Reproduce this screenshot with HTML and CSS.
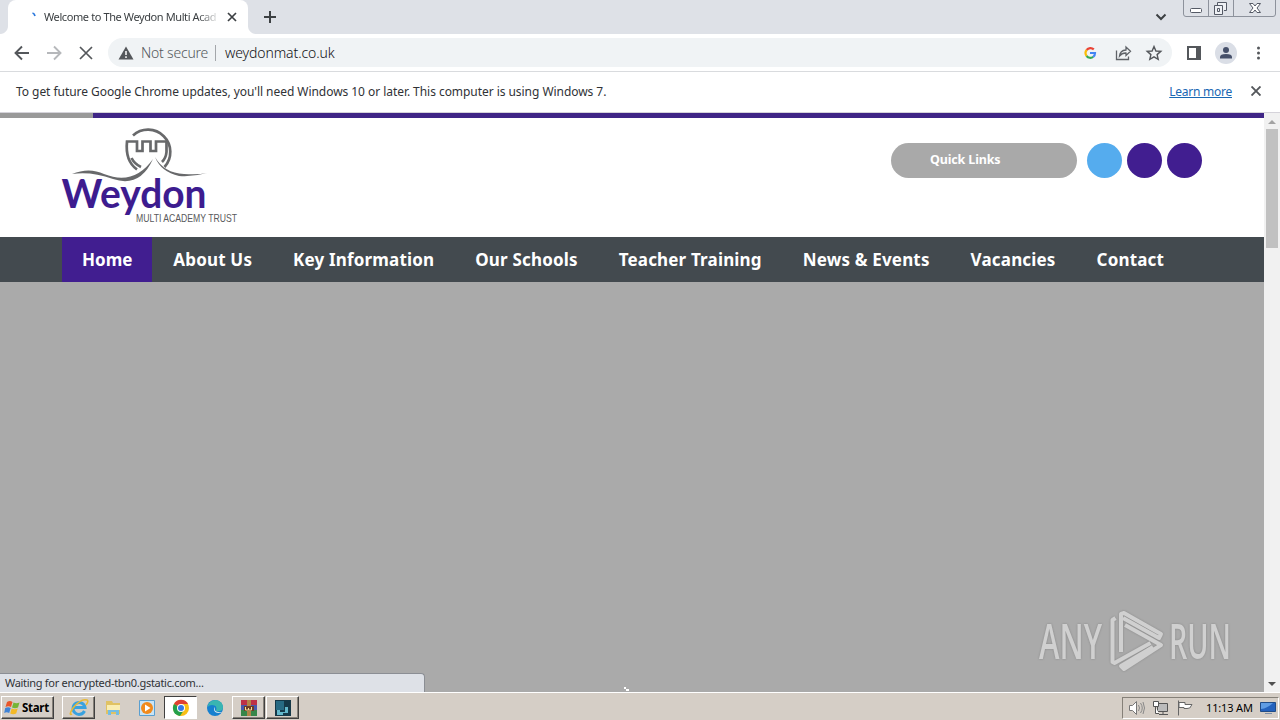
FILE: index.html
```html
<!DOCTYPE html>
<html lang="en">
<head>
<meta charset="utf-8">
<title>Welcome to The Weydon Multi Academy Trust</title>
<link rel="stylesheet" href="styles.css">
</head>
<body>
<div class="screen">
  <div class="tabstrip">
    <div class="tab-edge"></div>
    <div class="tab">
      <svg class="spinner" width="16" height="16" viewBox="0 0 16 16"><path d="M7.500 3Q9.500 3.500 10 6" fill="none" stroke="#2b78dc" stroke-width="1.700"/></svg>
      <span class="tab-title">Welcome to The Weydon Multi Acad</span>
      <svg class="tab-close" width="10" height="10" viewBox="0 0 10 10"><path d="M1 1l8 8M9 1L1 9" stroke="#3c4043" stroke-width="1.700"/></svg>
    </div>
    <div class="tab-right"></div>
    <svg class="new-tab" width="14" height="14" viewBox="0 0 14 14"><path d="M7 1v12M1 7h12" stroke="#3c4043" stroke-width="2"/></svg>
    <svg class="tab-search" width="12" height="8" viewBox="0 0 12 8"><path d="M1.500 1.500L6 6l4.500-4.500" fill="none" stroke="#3c4043" stroke-width="2"/></svg>
    <svg class="window-controls" width="94" height="18" viewBox="0 0 94 18">
      <path d="M.5 0V14q0 2.500 2.500 2.500H90q2.500 0 2.500-2.500V0M25.500 0V16M50.500 0V16" fill="none" stroke="#8d929c"/>
      <rect x="7.500" y="8.500" width="11" height="4" rx="1" fill="#fff" stroke="#555a66"/>
      <path d="M34.500 5V2.500h9v8H41M31.500 5.500h8v9h-8zM34.500 8.500h2v3h-2z" fill="#eef0f4" stroke="#555a66"/>
      <path d="M66.500 3.500h3.500l2 2.500 2-2.500h3.500L74 8l3.500 4.500H74L72 10l-2 2.500h-3.500L70 8z" fill="#fff" stroke="#555a66"/>
    </svg>
  </div>

  <div class="toolbar">
    <svg class="nav-buttons" width="80" height="16" viewBox="0 0 80 16">
      <path d="M15 8H2M8 1.500L1.500 8 8 14.500" fill="none" stroke="#54575b" stroke-width="1.900"/>
      <path d="M33 8h13M40 1.500L46.500 8 40 14.500" fill="none" stroke="#b6b8bb" stroke-width="1.900"/>
      <path d="M66 2l12 12M78 2L66 14" stroke="#54575b" stroke-width="1.700"/>
    </svg>
    <div class="omnibox">
      <svg width="16" height="14" viewBox="0 0 16 14"><path d="M8 .5L15.500 13.500H.5z" fill="#54575b"/><path d="M8 5v4M8 10.300v1.700" stroke="#fff" stroke-width="1.500"/></svg>
      <span class="not-secure">Not secure</span>
      <span class="divider"></span>
      <span class="url">weydonmat.co.uk</span>
      <svg class="omni-icons" width="80" height="18" viewBox="0 0 80 18">
        <g fill="none" stroke-width="2.200">
          <path d="M10.800 5.400A4.900 4.900 0 0 0 3.600 6" stroke="#ea4335"/>
          <path d="M3.600 6a5 5 0 0 0 0 6" stroke="#fbbc05"/>
          <path d="M3.600 12a4.900 4.900 0 0 0 6.600.9" stroke="#34a853"/>
          <path d="M7 9h5q0 2.600-1.800 3.900" stroke="#4285f4"/>
        </g>
        <path d="M33.500 6.500v9h12v-3M36.500 12q.5-5.500 6.500-6V3l4.500 4.300-4.500 4.200V9q-4-.2-6.500 3z" fill="none" stroke="#5f6368" stroke-width="1.300"/>
        <path d="M71 2.500l1.900 4.500 4.900.4-3.700 3.200 1.100 4.800-4.200-2.500-4.200 2.500 1.100-4.800-3.700-3.200 4.900-.4z" fill="none" stroke="#54575b" stroke-width="1.400"/>
      </svg>
    </div>
    <svg class="toolbar-icons" width="84" height="22" viewBox="0 0 84 22">
      <path d="M2 5h12v12H2z" fill="none" stroke="#54575b" stroke-width="2"/><path d="M10 4h5v14h-5z" fill="#54575b"/>
      <circle cx="40" cy="11" r="11" fill="#dadee6"/><circle cx="40" cy="8" r="3" fill="#46506a"/><path d="M34 16.500V15q0-3 6-3t6 3v1.500z" fill="#46506a"/>
      <g fill="#54575b"><circle cx="72.500" cy="6" r="1.500"/><circle cx="72.500" cy="11" r="1.500"/><circle cx="72.500" cy="16" r="1.500"/></g>
    </svg>
  </div>

  <div class="infobar">
    <span class="info-text">To get future Google Chrome updates, you'll need Windows 10 or later. This computer is using Windows 7.</span>
    <a class="learn">Learn more</a>
    <svg width="10" height="10" viewBox="0 0 10 10"><path d="M.5.5l9 9M9.500.5l-9 9" stroke="#54575b" stroke-width="1.900"/></svg>
  </div>

  <div class="viewport">
    <div class="page">
      <div class="topline"></div>
      <div class="site-header">
        <svg class="logo" width="180" height="102" viewBox="60 124 180 102">
          <g fill="none" stroke="#68696b" stroke-width="2.700">
            <path d="M133 135.500A22.300 22.300 0 0 1 164.500 167"/>
            <path d="M137 169.500Q125 161 127 141.500H137V151H142.500V141.500H150.500V151H156V141.500H166.500V152Q166 158 162 162"/>
            <path d="M131.500 158q3 6 9.500 9"/>
          </g>
          <path d="M72 174q17-7 32 0 30 12 49-15-13 29-40 20-22-8-41-5z" fill="#68696b"/>
          <path d="M155 157q9 16 29 17 14 1 23-1-14 4-28 3-18-4-24-19z" fill="#68696b"/>
          <text x="61.500" y="207.500" class="logo-name" textLength="145" lengthAdjust="spacingAndGlyphs">Weydon</text>
          <text x="136" y="222" class="logo-sub" textLength="101" lengthAdjust="spacingAndGlyphs">MULTI ACADEMY TRUST</text>
        </svg>
        <div class="quick">Quick Links</div>
        <div class="social blue"></div>
        <div class="social"></div>
        <div class="social"></div>
      </div>
      <div class="menu">
        <a class="active">Home</a><a>About Us</a><a>Key Information</a><a>Our Schools</a><a>Teacher Training</a><a>News &amp; Events</a><a>Vacancies</a><a>Contact</a>
      </div>
      <div class="hero"></div>
    </div>
    <div class="scrollbar">
      <svg width="8" height="4" viewBox="0 0 8 4"><path d="M0 4l4-4 4 4z" fill="#a3a3a3"/></svg>
      <div class="thumb"></div>
      <svg class="down" width="8" height="4" viewBox="0 0 8 4"><path d="M0 0l4 4 4-4z" fill="#505050"/></svg>
    </div>
    <div class="status">Waiting for encrypted-tbn0.gstatic.com...</div>
    <svg class="busy" width="8" height="6" viewBox="0 0 8 6"><path d="M0 1h2v2H0zM2 3h3v2H2z" fill="#fff"/></svg>
    <svg class="watermark" width="204" height="76" viewBox="1034 600 204 76">
      <text x="1039" y="659" textLength="63" lengthAdjust="spacingAndGlyphs">ANY</text>
      <text x="1169" y="659" textLength="62" lengthAdjust="spacingAndGlyphs">RUN</text>
      <g fill="none" stroke="#d0d0d0" stroke-width="4" stroke-linejoin="round">
        <path d="M1115.500 618l-3 2v42l2 1 36-20"/>
        <path d="M1121 652v-38l3-1 37 21-2 4-36-20"/>
        <path d="M1125 625l36 20-37 24-3-3 32-19"/>
      </g>
    </svg>
  </div>

  <div class="taskbar">
    <div class="start">
      <svg width="17" height="16" viewBox="0 0 17 16"><path d="M3 2q3-2 5.500 0L7 7Q4.500 5.500 1.500 7z" fill="#e8562a"/><path d="M9.500 2.500q3 1.500 6 0l-1.500 5q-3 1.500-6 0z" fill="#76b536"/><path d="M1.200 8q3-1.500 5.500 0L5.200 13q-2.500-1.500-5 0z" fill="#3f83d6"/><path d="M7.700 8.500q3 1.500 6 0l-1.500 5q-3 1.500-6 0z" fill="#f4b926"/></svg>
      <span>Start</span>
    </div>
    <div class="task raised"><svg width="20" height="20" viewBox="0 0 20 20"><path d="M15.500 13A6 6 0 1 1 16 9.500H5.500" fill="none" stroke="#39a2df" stroke-width="3"/><path d="M3 16Q-1 18 4 10 12 0 18 2q2 1-1 5" fill="none" stroke="#e8b935" stroke-width="1.500"/></svg></div>
    <div class="task"><svg width="20" height="20" viewBox="0 0 20 20"><path d="M3 3h6l1 2h7v11H3z" fill="#e0c263"/><path d="M4 7h13v5H4z" fill="#f9edb2"/><path d="M5 17v-5h11v5h-3v-3H8v3z" fill="#75bde2"/></svg></div>
    <div class="task"><svg width="20" height="20" viewBox="0 0 20 20"><path d="M2.500 2.500h15v15h-15z" fill="#c9e4f5" stroke="#5a9fd0"/><circle cx="10" cy="10" r="6" fill="#f18a1c"/><path d="M8 6.500v7l5.500-3.500z" fill="#fff"/></svg></div>
    <div class="task pressed"><svg width="18" height="18" viewBox="0 0 18 18"><circle cx="9" cy="9" r="8" fill="#f9bf16"/><path d="M9 9L2 5A8 8 0 0 1 16 5H9z" fill="#df4033"/><path d="M2 5a8 8 0 0 0 6 12l4-6-3-2z" fill="#25a04b"/><circle cx="9" cy="9" r="4" fill="#fff"/><circle cx="9" cy="9" r="3" fill="#3579e6"/></svg></div>
    <div class="task"><svg width="18" height="18" viewBox="0 0 18 18"><circle cx="9" cy="9" r="8" fill="#1680cf"/><path d="M1.500 8Q3 1 10 1q7 1 7 8-1 4-7 3 2-6-4-6-3 0-4.500 2z" fill="#39b5b1"/><path d="M9 8q-2 6 7 5-1 1-3 1-5 0-5-4 0-1 1-2z" fill="#dceaf0"/></svg></div>
    <div class="task raised"><svg width="18" height="18" viewBox="0 0 18 18"><path d="M1 1h16v5H1z" fill="#bd3147"/><path d="M1 6h16v5H1z" fill="#4759ad"/><path d="M1 11h16v6H1z" fill="#38864a"/><path d="M7 1h4v16H7z" fill="#b28549"/><path d="M4 7h10v5H4z" fill="#6e3b25"/><path d="M5.500 8v3h3V9m0 2h3V8" fill="none" stroke="#f3df99"/></svg></div>
    <div class="task raised"><svg width="18" height="18" viewBox="0 0 18 18"><path d="M1 1h16v16H1z" fill="#153848"/><path d="M2 2h8v9H2z" fill="#276a83"/><path d="M3 11h3v2h5V8h3v6H9v2H3z" fill="#63b7cb"/></svg></div>
    <div class="tray">
      <svg width="72" height="18" viewBox="0 0 72 18">
        <path d="M2.500 6.500h3l4-4v13l-4-4h-3z" fill="#fff" stroke="#777"/><path d="M11.500 6q2 3 0 6M13.500 4q3.500 5 0 10M16 3q3 6 0 12" fill="none" stroke="#888"/>
        <path d="M30.500 4.500h10v8h-10zM32 15.500h9M36 13v2" fill="#bbb" stroke="#555"/><path d="M26.500 2.500h5v5h-5zM28.500 8v6.500H32" fill="#fff" stroke="#555"/>
        <path d="M51.500 1.500v15M52 3.500h6v2h7q-2 5-5 4h-3v-1h-5z" fill="#fff" stroke="#666"/>
      </svg>
      <span class="clock">11:13 AM</span>
      <svg width="16" height="14" viewBox="0 0 16 14"><path d="M.5 1.500h15v9H.5z" fill="#2462bd" stroke="#204c87"/><path d="M1 8q7-1 12-6H1z" fill="#5f9ce3"/><path d="M5 12.500h7" stroke="#7d8fa7"/></svg>
    </div>
  </div>
</div>
</body>
</html>
```
FILE: styles.css
```css
* { box-sizing: border-box; }
body { margin: 0; overflow: hidden; font-family: "Noto Sans", sans-serif; }
svg { display: block; flex: none; }
.screen { width: 1280px; height: 720px; display: flex; flex-direction: column; background: #fff; white-space: nowrap; }

.tabstrip { height: 34px; flex: none; display: flex; align-items: center; background: linear-gradient(#dee1e7, #dee1e7) 0 0 no-repeat; }
.tab-edge, .tab-right { width: 8px; height: 34px; }
.tab-edge { background: radial-gradient(circle at 0 26px, #dee1e7 7.500px, #fff 8.500px) 0 26px / 8px 8px no-repeat; background: radial-gradient(circle at 0 0, #dee1e7 7.500px, #fff 8.500px) 0 26px / 8px 8px no-repeat; }
.tab-right { background: radial-gradient(circle at 100% 0, #dee1e7 7.500px, #fff 8.500px) 0 26px / 8px 8px no-repeat; }
.tab { width: 240px; height: 34px; display: flex; align-items: center; padding: 0 11px 0 17px; background: #fff; border-radius: 8px 8px 0 0; }
.spinner { margin-top: 1px; }
.tab-title { width: 180px; margin: 0 0 1px 3px; font-size: 11px; letter-spacing: -.4px; color: #3c4043; mask-image: linear-gradient(to right, #000 154px, transparent 176px); }
.tab-close { margin-left: auto; }
.new-tab { margin-left: 7px; }
.tab-search { margin-left: auto; }
.window-controls { align-self: flex-start; margin: 0 3px 0 16px; }

.toolbar { height: 38px; flex: none; display: flex; align-items: center; padding: 0 10px 0 14px; border-bottom: 1px solid #d9dbde; }
.omnibox { width: 1064px; height: 29px; margin-left: 14px; padding-left: 10px; display: flex; align-items: center; background: #f0f3f5; border-radius: 15px; font-size: 14px; }
.not-secure { width: 67px; margin-left: 7px; color: #54585c; font-weight: 300; letter-spacing: -.2px; }
.divider { width: 1px; height: 16px; margin: 0 9px 0 7px; background: #a3a6aa; }
.url { color: #101114; font-weight: 300; letter-spacing: -.1px; }
.omni-icons { margin: 0 9px 0 auto; }
.toolbar-icons { margin-left: 14px; }

.infobar { height: 41px; flex: none; display: flex; align-items: center; padding: 0 19px 2px 16px; border-bottom: 1px solid #d5d3da; font-size: 12px; color: #303236; }
.info-text { letter-spacing: -.05px; }
.learn { margin-left: auto; margin-right: 19px; color: #1967b3; text-decoration: underline; letter-spacing: -.25px; }

.viewport { position: relative; height: 579px; flex: none; display: flex; }
.page { width: 1264px; display: flex; flex-direction: column; }
.topline { height: 5px; background: linear-gradient(to right, #999 93px, #3f2586 93px); }
.site-header { height: 119px; display: flex; padding: 0 62px 0 60px; }
.logo { margin-top: 6px; }
.logo-name { font: 700 41px Lato, sans-serif; fill: #3d1c8f; }
.logo-sub { font: 400 10.500px "Liberation Sans", sans-serif; fill: #58595b; }
.quick { width: 186px; height: 35px; margin: 25px 5px 0 auto; padding-left: 39px; border-radius: 18px; background: #a9a9a9; color: #fff; font: 700 12.500px/33px "Noto Sans", sans-serif; letter-spacing: -.15px; }
.social { width: 35px; height: 35px; margin: 25px 0 0 5px; border-radius: 50%; background: #411e90; }
.blue { background: #55acee; }
.menu { height: 45px; display: flex; gap: 1px; padding-left: 62px; background: #434a4f; color: #fff; font: 700 17px/45px "Noto Sans", sans-serif; letter-spacing: .17px; }
.menu a { padding: 0 20px; }
.menu .active { background: #411e90; letter-spacing: 0; }
.hero { flex: 1; background: #aaa; }
.scrollbar { width: 16px; padding: 7px 2px 6px; display: flex; flex-direction: column; align-items: center; background: #f1f1f1; }
.thumb { width: 12px; height: 119px; margin-top: 5px; background: #c1c1c1; }
.down { margin-top: auto; }
.status { position: absolute; left: 0; bottom: 0; width: 425px; height: 19px; padding-left: 5px; background: #dee1e7; border: solid #8b8e94; border-width: 1px 1px 0 0; border-top-right-radius: 4px; color: #303236; font-size: 11px; letter-spacing: -.3px; line-height: 18px; }
.busy { position: absolute; left: 624px; bottom: 0; }
.watermark { position: absolute; left: 1034px; top: 487px; filter: drop-shadow(0 0 1px #888); }
.watermark text { font: 600 49px "Open Sans", sans-serif; fill: #d0d0d0; }

.taskbar { height: 28px; flex: none; display: flex; align-items: center; padding: 2px 1px 0 1px; border-top: 1px solid #fff; background: #d5cec6; }
.start { width: 53px; height: 23px; display: flex; align-items: center; gap: 1px; padding-left: 2px; border: 1px solid; border-color: #fff #404040 #404040 #fff; box-shadow: inset -1px -1px #858078; font: 700 11.500px "Noto Sans", sans-serif; color: #000; margin-right: 8px; }
.start span { letter-spacing: -.3px; }
.task { width: 33px; height: 23px; display: flex; align-items: center; justify-content: center; margin-right: 1px; }
.raised { border: 1px solid; border-color: #fff #404040 #404040 #fff; box-shadow: inset -1px -1px #858078; }
.pressed { border: 1px solid; border-color: #404040 #fff #fff #404040; background: #fff; }
.tray { width: 157px; height: 22px; margin-left: auto; padding-left: 4px; display: flex; align-items: center; border: 1px solid; border-color: #858078 #fff #fff #858078; }
.clock { width: 48px; margin: 0 6px 0 7px; font-size: 11px; letter-spacing: -.15px; color: #000; }
```
